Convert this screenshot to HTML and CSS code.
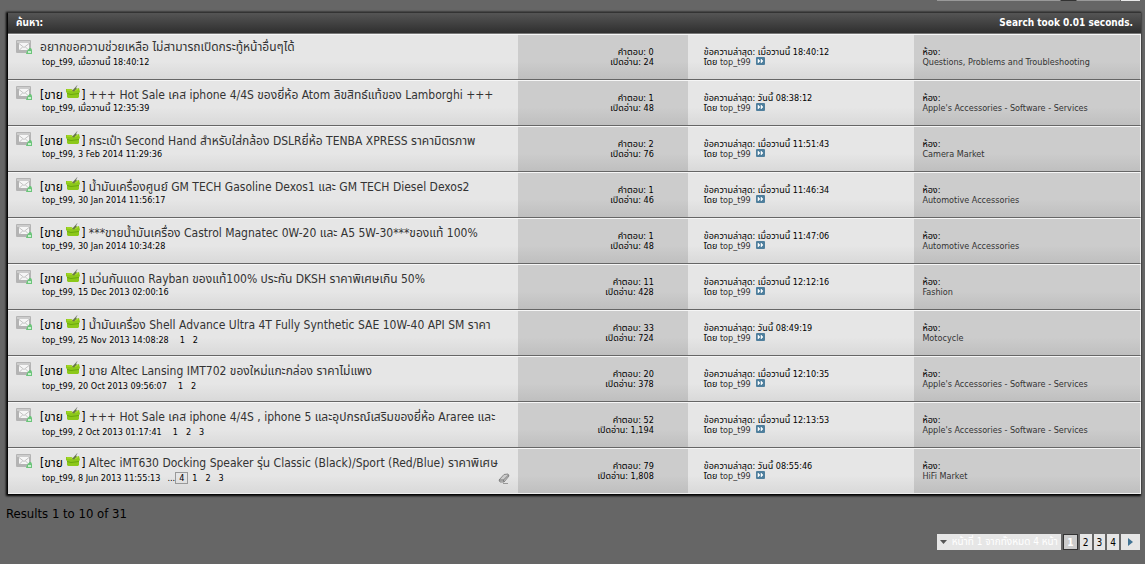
FILE: index.html
```html
<!DOCTYPE html>
<html lang="th">
<head>
    <meta charset="UTF-8">
    <meta name="viewport" content="width=device-width, initial-scale=1.0">
    <title>ค้นหา</title>
    <link rel="stylesheet" href="styles.css">
</head>

<body>
    <!-- Shared icons -->
    <svg class="sprites" aria-hidden="true">
        <symbol id="icon-post" viewBox="0 0 16 14">
            <rect x="0" y="0" width="15" height="13" rx="1" fill="#b4b4b4"/>
            <rect x="1" y="1" width="13" height="2" fill="#ccc"/>
            <rect x="3" y="3" width="10" height="7" fill="#f6f6f6"/>
            <path d="M3 3.500l5 4 5-4M3.500 10l3-3M12.500 10l-3-3" fill="none" stroke="#c2c2c2"/>
            <path d="M10 14l1-3 2.500-3H15l1 2v4z" fill="#6cc47a"/>
            <rect x="12" y="11" width="3" height="2" fill="#c8efce"/>
        </symbol>
        <symbol id="icon-sale" viewBox="0 0 14 15">
            <path d="M0 4h5l2 1 6-2 1 4-1 1v4l-1 1H2l-1-1V8L0 7z" fill="#8cc81a"/>
            <path d="M1 8l4 1 8-1v1l-8 1-4-1z" fill="#69a60c"/>
            <path d="M1 5h4l2 1 5-1.500" fill="none" stroke="#b4e02c"/>
            <path d="M6 6l3.500-4 1.500 1L8 6.500z" fill="#66744c"/>
            <path d="M10 2l1-1.500" stroke="#888"/>
        </symbol>
        <symbol id="icon-last" viewBox="0 0 9 8">
            <rect width="9" height="8" rx="1" fill="#4f7f9d"/>
            <path d="M2 2l2 2-2 2zM5 2l2 2-2 2z" fill="#fff" stroke="#fff" stroke-width=".5"/>
        </symbol>
        <symbol id="icon-clip" viewBox="0 0 12 11">
            <path d="M1 7l5-5.500 4-.5 1 2-5 6H2z" fill="#ccc" stroke="#888"/>
            <path d="M1 7h4.500L10.500 2M5.500 7L6 9" fill="none" stroke="#777"/>
            <path d="M5 10.500h5" stroke="#999"/>
        </symbol>
    </svg>

    <div class="pager-edge"><span></span><span></span><span></span><span></span></div>

    <table class="results">
        <colgroup>
            <col class="col-thread">
            <col class="col-stats">
            <col class="col-last">
            <col class="col-forum">
        </colgroup>
        <thead>
            <tr>
                <th colspan="2" class="heading">ค้นหา:</th>
                <th colspan="2" class="took">Search took 0.01 seconds.</th>
            </tr>
        </thead>
        <tbody>
            <tr>
                <td class="thread"><div class="info">
                    <svg class="post"><use href="#icon-post"/></svg>
                    <div class="text">
                        <h3><a href="#">อยากขอความช่วยเหลือ ไม่สามารถเปิดกระทู้หน้าอื่นๆได้</a></h3>
                        <p>top_t99, เมื่อวานนี้ 18:40:12</p>
                    </div>
                </div></td>
                <td class="stats">คำตอบ: 0<br>เปิดอ่าน: 24</td>
                <td class="last">ข้อความล่าสุด: เมื่อวานนี้ 18:40:12<br>โดย <a href="#">top_t99</a> <svg><use href="#icon-last"/></svg></td>
                <td class="forum">ห้อง:<br><a href="#">Questions, Problems and Troubleshooting</a></td>
            </tr>
            <tr>
                <td class="thread"><div class="info">
                    <svg class="post"><use href="#icon-post"/></svg>
                    <div class="text">
                        <h3>[ขาย <svg><use href="#icon-sale"/></svg>] <a href="#">+++ Hot Sale เคส iphone 4/4S ของยี่ห้อ Atom ลิขสิทธ์แท้ของ Lamborghi +++</a></h3>
                        <p>top_t99, เมื่อวานนี้ 12:35:39</p>
                    </div>
                </div></td>
                <td class="stats">คำตอบ: 1<br>เปิดอ่าน: 48</td>
                <td class="last">ข้อความล่าสุด: วันนี้ 08:38:12<br>โดย <a href="#">top_t99</a> <svg><use href="#icon-last"/></svg></td>
                <td class="forum">ห้อง:<br><a href="#">Apple's Accessories - Software - Services</a></td>
            </tr>
            <tr>
                <td class="thread"><div class="info">
                    <svg class="post"><use href="#icon-post"/></svg>
                    <div class="text">
                        <h3>[ขาย <svg><use href="#icon-sale"/></svg>] <a href="#">กระเป๋า Second Hand สำหรับใส่กล้อง DSLRยี่ห้อ TENBA XPRESS ราคามิตรภาพ</a></h3>
                        <p>top_t99, 3 Feb 2014 11:29:36</p>
                    </div>
                </div></td>
                <td class="stats">คำตอบ: 2<br>เปิดอ่าน: 76</td>
                <td class="last">ข้อความล่าสุด: เมื่อวานนี้ 11:51:43<br>โดย <a href="#">top_t99</a> <svg><use href="#icon-last"/></svg></td>
                <td class="forum">ห้อง:<br><a href="#">Camera Market</a></td>
            </tr>
            <tr>
                <td class="thread"><div class="info">
                    <svg class="post"><use href="#icon-post"/></svg>
                    <div class="text">
                        <h3>[ขาย <svg><use href="#icon-sale"/></svg>] <a href="#">น้ำมันเครื่องศูนย์ GM TECH Gasoline Dexos1 และ GM TECH Diesel Dexos2</a></h3>
                        <p>top_t99, 30 Jan 2014 11:56:17</p>
                    </div>
                </div></td>
                <td class="stats">คำตอบ: 1<br>เปิดอ่าน: 46</td>
                <td class="last">ข้อความล่าสุด: เมื่อวานนี้ 11:46:34<br>โดย <a href="#">top_t99</a> <svg><use href="#icon-last"/></svg></td>
                <td class="forum">ห้อง:<br><a href="#">Automotive Accessories</a></td>
            </tr>
            <tr>
                <td class="thread"><div class="info">
                    <svg class="post"><use href="#icon-post"/></svg>
                    <div class="text">
                        <h3>[ขาย <svg><use href="#icon-sale"/></svg>] <a href="#">***ขายน้ำมันเครื่อง Castrol Magnatec 0W-20 และ A5 5W-30***ของแท้ 100%</a></h3>
                        <p>top_t99, 30 Jan 2014 10:34:28</p>
                    </div>
                </div></td>
                <td class="stats">คำตอบ: 1<br>เปิดอ่าน: 48</td>
                <td class="last">ข้อความล่าสุด: เมื่อวานนี้ 11:47:06<br>โดย <a href="#">top_t99</a> <svg><use href="#icon-last"/></svg></td>
                <td class="forum">ห้อง:<br><a href="#">Automotive Accessories</a></td>
            </tr>
            <tr>
                <td class="thread"><div class="info">
                    <svg class="post"><use href="#icon-post"/></svg>
                    <div class="text">
                        <h3>[ขาย <svg><use href="#icon-sale"/></svg>] <a href="#">แว่นกันแดด Rayban ของแท้100% ประกัน DKSH ราคาพิเศษเกิน 50%</a></h3>
                        <p>top_t99, 15 Dec 2013 02:00:16</p>
                    </div>
                </div></td>
                <td class="stats">คำตอบ: 11<br>เปิดอ่าน: 428</td>
                <td class="last">ข้อความล่าสุด: เมื่อวานนี้ 12:12:16<br>โดย <a href="#">top_t99</a> <svg><use href="#icon-last"/></svg></td>
                <td class="forum">ห้อง:<br><a href="#">Fashion</a></td>
            </tr>
            <tr>
                <td class="thread"><div class="info">
                    <svg class="post"><use href="#icon-post"/></svg>
                    <div class="text">
                        <h3>[ขาย <svg><use href="#icon-sale"/></svg>] <a href="#">น้ำมันเครื่อง Shell Advance Ultra 4T Fully Synthetic SAE 10W-40 API SM ราคา</a></h3>
                        <p class="paged">top_t99, 25 Nov 2013 14:08:28 <span class="pages"><a href="#">1</a><a href="#">2</a></span></p>
                    </div>
                </div></td>
                <td class="stats">คำตอบ: 33<br>เปิดอ่าน: 724</td>
                <td class="last">ข้อความล่าสุด: วันนี้ 08:49:19<br>โดย <a href="#">top_t99</a> <svg><use href="#icon-last"/></svg></td>
                <td class="forum">ห้อง:<br><a href="#">Motocycle</a></td>
            </tr>
            <tr>
                <td class="thread"><div class="info">
                    <svg class="post"><use href="#icon-post"/></svg>
                    <div class="text">
                        <h3>[ขาย <svg><use href="#icon-sale"/></svg>] <a href="#">ขาย Altec Lansing IMT702 ของใหม่แกะกล่อง ราคาไม่แพง</a></h3>
                        <p class="paged">top_t99, 20 Oct 2013 09:56:07 <span class="pages"><a href="#">1</a><a href="#">2</a></span></p>
                    </div>
                </div></td>
                <td class="stats">คำตอบ: 20<br>เปิดอ่าน: 378</td>
                <td class="last">ข้อความล่าสุด: เมื่อวานนี้ 12:10:35<br>โดย <a href="#">top_t99</a> <svg><use href="#icon-last"/></svg></td>
                <td class="forum">ห้อง:<br><a href="#">Apple's Accessories - Software - Services</a></td>
            </tr>
            <tr>
                <td class="thread"><div class="info">
                    <svg class="post"><use href="#icon-post"/></svg>
                    <div class="text">
                        <h3>[ขาย <svg><use href="#icon-sale"/></svg>] <a href="#">+++ Hot Sale เคส iphone 4/4S , iphone 5 และอุปกรณ์เสริมของยี่ห้อ Araree และ</a></h3>
                        <p class="paged">top_t99, 2 Oct 2013 01:17:41 <span class="pages"><a href="#">1</a><a href="#">2</a><a href="#">3</a></span></p>
                    </div>
                </div></td>
                <td class="stats">คำตอบ: 52<br>เปิดอ่าน: 1,194</td>
                <td class="last">ข้อความล่าสุด: เมื่อวานนี้ 12:13:53<br>โดย <a href="#">top_t99</a> <svg><use href="#icon-last"/></svg></td>
                <td class="forum">ห้อง:<br><a href="#">Apple's Accessories - Software - Services</a></td>
            </tr>
            <tr>
                <td class="thread"><div class="info">
                    <svg class="post"><use href="#icon-post"/></svg>
                    <div class="text">
                        <h3>[ขาย <svg><use href="#icon-sale"/></svg>] <a href="#">Altec iMT630 Docking Speaker รุ่น Classic (Black)/Sport (Red/Blue) ราคาพิเศษ</a></h3>
                        <p class="paged">top_t99, 8 Jun 2013 11:55:13 <span class="pages">...<a href="#" class="end">4</a><a href="#">1</a><a href="#">2</a><a href="#">3</a></span>
                            <svg class="clip"><use href="#icon-clip"/></svg></p>
                    </div>
                </div></td>
                <td class="stats">คำตอบ: 79<br>เปิดอ่าน: 1,808</td>
                <td class="last">ข้อความล่าสุด: วันนี้ 08:55:46<br>โดย <a href="#">top_t99</a> <svg><use href="#icon-last"/></svg></td>
                <td class="forum">ห้อง:<br><a href="#">HiFi Market</a></td>
            </tr>
        </tbody>
    </table>

    <p class="count">Results 1 to 10 of 31</p>

    <nav class="pager">
        <button type="button" class="jump"><svg viewBox="0 0 7 5"><path d="M0 0h7L3.500 4z" fill="#555"/></svg>หน้าที่ 1 จากทั้งหมด 4 หน้า</button>
        <a href="#" class="current">1</a>
        <a href="#">2</a>
        <a href="#">3</a>
        <a href="#">4</a>
        <a href="#" class="next" aria-label="Next"><svg viewBox="0 0 5 8"><path d="M0 0l5 4-5 4z" fill="#417394"/></svg></a>
    </nav>
</body>
</html>
```
FILE: styles.css
```css
body {
    margin: 0;
    background: #666;
    color: #000;
    font-family: Tahoma, "DejaVu Sans Condensed", "Noto Sans Thai", sans-serif;
    font-size: 9px;
    line-height: 10px;
}
a {
    color: #333;
    text-decoration: none;
}
a:hover {
    text-decoration: underline;
}
h3, p {
    margin: 0;
    font-weight: normal;
}
.sprites {
    display: none;
}
.pager-edge {
    display: flex;
    justify-content: flex-end;
    height: 1px;
    margin: 0 5px 11px 0;
}
.pager-edge span {
    width: 123px;
    background: #999;
}
.pager-edge span:nth-child(2) {
    width: 15px;
    margin: 0 1px;
    background: #333;
}
.pager-edge span:nth-child(3) {
    width: 43px;
}
.pager-edge span:nth-child(4) {
    width: 19px;
    margin-left: 1px;
    background: #e8e8e8;
}
.results {
    width: calc(100% - 12px);
    margin: 0 4px 0 8px;
    border-spacing: 0;
    table-layout: fixed;
    box-shadow: -1px 1px 2px 1px #000;
}
.col-thread {
    width: 45%;
}
.col-stats {
    width: 15%;
}
.col-last, .col-forum {
    width: 20%;
}
.results th {
    height: 20px;
    padding: 0 8px;
    border-top: 1px solid #333;
    border-bottom: 1px solid #777;
    background: linear-gradient(#555, #2f2f2f);
    color: #fff;
    font-size: 10px;
    text-align: left;
}
.results th.took {
    text-align: right;
}
.results td {
    height: 44px;
    padding: 0;
    border-top: 1px solid #f6f6f6;
    border-bottom: 1px solid #666;
    background: linear-gradient(#e6e6e6 60%, #d9d9d9);
    white-space: nowrap;
}
.results tr:last-child td {
    border-bottom-color: #eee;
}
.results .thread {
    vertical-align: top;
}
.results .stats, .results .forum {
    background: linear-gradient(#ccc 60%, #bfbfbf);
}
.results .stats {
    padding-right: 34px;
    text-align: right;
}
.results .last {
    padding-left: 16px;
}
.results .last svg {
    width: 9px;
    height: 8px;
    margin-left: 3px;
}
.results .forum {
    padding-left: 8px;
    border-right: 1px solid #eee;
}
.info {
    display: flex;
    gap: 8px;
    padding: 4px 8px;
}
.post {
    flex: none;
    width: 16px;
    height: 14px;
    margin-top: 1px;
}
.text {
    flex: 1;
    min-width: 0;
}
.text h3 {
    height: 17px;
    font-size: 12px;
    line-height: 17px;
}
.text h3 svg {
    width: 14px;
    height: 15px;
    margin-right: 1px;
    vertical-align: -1px;
}
.text p {
    display: flex;
    align-items: center;
    height: 12px;
    padding-left: 2px;
}
.text .paged {
    margin-top: 2px;
}
.pages {
    margin-left: 7px;
}
.pages a {
    padding: 0 4px;
    color: #000;
}
.pages .end {
    padding: 0 3px;
    border: 1px solid #999;
}
.clip {
    width: 12px;
    height: 11px;
    margin-left: auto;
}
.count {
    margin: 12px 6px;
    font-size: 13px;
    line-height: 16px;
}
.pager {
    display: flex;
    justify-content: flex-end;
    gap: 2px;
    padding: 0 5px 0 0;
}
.pager a, .pager button {
    display: flex;
    align-items: center;
    justify-content: center;
    box-sizing: border-box;
    height: 16px;
    padding: 0 3px;
    border: 0;
    background: #e6e6e6;
    color: #000;
    font: 10px Tahoma, "DejaVu Sans Condensed", "Noto Sans Thai", sans-serif;
}
.pager .jump {
    gap: 5px;
    color: #fff;
}
.pager .jump svg {
    width: 7px;
    height: 5px;
}
.pager .current {
    width: 15px;
    border: 1px solid #333;
    background: #ccc;
    color: #fff;
    font-weight: bold;
}
.pager .next {
    width: 19px;
}
.pager .next svg {
    width: 5px;
    height: 8px;
}
```
